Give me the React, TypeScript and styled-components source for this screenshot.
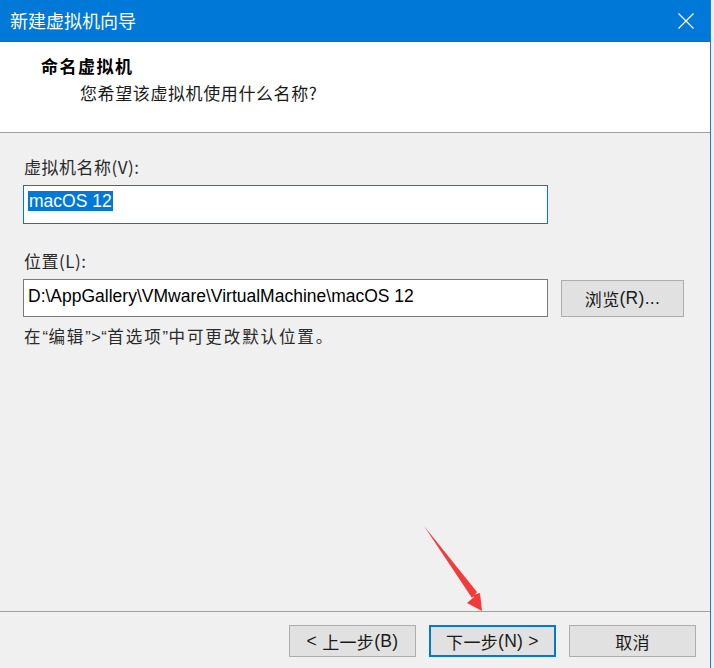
import React from "react";
import styled, { createGlobalStyle } from "styled-components";

const Global = createGlobalStyle`
  html, body { margin: 0; padding: 0; background: #f0f0f0; }
  body { font-family: "Noto Sans CJK SC", "Liberation Sans", sans-serif; }
  * { box-sizing: border-box; }
`;

const Win = styled.div`
  position: relative;
  width: 711px;
  height: 668px;
  display: flex;
  flex-direction: column;
  border-right: 1px solid #1a7fd4;
  background: #f0f0f0;
  overflow: hidden;
`;

const TitleBar = styled.div`
  height: 42px;
  flex: none;
  background: #0078d7;
  color: #fff;
  display: flex;
  align-items: center;
  justify-content: space-between;
  padding: 0 16px 0 10px;
  font-family: "Noto Sans CJK SC", sans-serif;
  font-size: 18px;
`;

const TitleText = styled.span`
  line-height: 1;
  margin-top: -3px;
`;

const Header = styled.div`
  height: 91px;
  flex: none;
  background: #fff;
  border-bottom: 1px solid #a0a0a0;
  padding: 12px 0 0 41px;
  font-family: "Noto Sans CJK SC", sans-serif;
  color: #000;
`;

const HeaderTitle = styled.div`
  font-size: 17px;
  font-weight: 700;
  letter-spacing: 1.5px;
  line-height: 24px;
`;

const HeaderSub = styled.div`
  font-size: 17px;
  letter-spacing: 0.6px;
  line-height: 24px;
  margin: 3px 0 0 39px;
  color: #1a1a1a;
`;

const Body = styled.div`
  flex: 1;
  padding: 22px 0 0 23px;
  display: flex;
  flex-direction: column;
  align-items: flex-start;
`;

const Label = styled.div<{ $gap?: number }>`
  font-family: "Noto Sans CJK SC", sans-serif;
  font-size: 17px;
  letter-spacing: 0.5px;
  line-height: 24px;
  color: #2a2a2a;
  margin-top: ${(p) => p.$gap ?? 0}px;
  padding-left: 1px;
`;

const Row = styled.div`
  display: flex;
  align-items: center;
  gap: 13px;
  margin-top: 6px;
`;

const Field = styled.div<{ $focused?: boolean; $h: number }>`
  width: 525px;
  height: ${(p) => p.$h}px;
  background: #fff;
  border: 1px solid ${(p) => (p.$focused ? "#0078d7" : "#7a7a7a")};
  display: flex;
  align-items: flex-start;
  padding: 5px 0 0 4px;
  font-family: "Liberation Sans", "Noto Sans CJK SC", sans-serif;
  font-size: 17.5px;
  color: #000;
`;

const Selected = styled.span`
  background: #0078d7;
  color: #fff;
  line-height: 20px;
  padding: 0 1px;
`;

const FieldText = styled.span`
  line-height: 20px;
  padding: 1px 0 0 0;
`;

const Button = styled.button<{ $primary?: boolean; $w: number; $h: number }>`
  width: ${(p) => p.$w}px;
  height: ${(p) => p.$h}px;
  background: #e1e1e1;
  border: ${(p) => (p.$primary ? "2px solid #0078d7" : "1px solid #adadad")};
  font-family: "Noto Sans CJK SC", "Liberation Sans", sans-serif;
  font-size: 17px;
  color: #1a1a1a;
  padding: 0;
  display: flex;
  align-items: center;
  justify-content: center;
  letter-spacing: 0.3px;
`;

const Latin = styled.span`
  font-family: "Liberation Sans", sans-serif;
  font-size: 17.5px;
`;

const Hint = styled.div`
  font-family: "Noto Sans CJK SC", sans-serif;
  font-size: 16.5px;
  letter-spacing: 1.9px;
  line-height: 24px;
  color: #2a2a2a;
  margin-top: 7px;
  padding-left: 1px;
`;

const Quote = styled.span`
  font-family: "Liberation Sans", sans-serif;
  letter-spacing: 0.5px;
`;

const Footer = styled.div`
  flex: none;
  height: 57px;
  border-top: 1px solid #a0a0a0;
  display: flex;
  justify-content: flex-end;
  align-items: flex-start;
  gap: 13px;
  padding: 13px 14px 0 0;
`;

const ArrowLayer = styled.svg`
  position: absolute;
  left: 0;
  top: 0;
  pointer-events: none;
`;

export default function App() {
  return (
    <>
      <Global />
      <Win>
        <TitleBar>
          <TitleText>新建虚拟机向导</TitleText>
          <svg width="16" height="16" viewBox="0 0 16 16">
            <path d="M0.5 0.5 L15.5 15.5 M15.5 0.5 L0.5 15.5" stroke="#fff" strokeWidth="1.2" fill="none" />
          </svg>
        </TitleBar>
        <Header>
          <HeaderTitle>命名虚拟机</HeaderTitle>
          <HeaderSub>您希望该虚拟机使用什么名称?</HeaderSub>
        </Header>
        <Body>
          <Label>虚拟机名称(V):</Label>
          <Row>
            <Field $focused $h={39}>
              <Selected>macOS 12</Selected>
            </Field>
          </Row>
          <Label $gap={25}>位置(L):</Label>
          <Row>
            <Field $h={38}>
              <FieldText>D:\AppGallery\VMware\VirtualMachine\macOS 12</FieldText>
            </Field>
            <Button $w={123} $h={37}>
              浏览<Latin>(R)...</Latin>
            </Button>
          </Row>
          <Hint>
            在<Quote>“</Quote>编辑<Quote>”&gt;“</Quote>首选项<Quote>”</Quote>中可更改默认位置。
          </Hint>
        </Body>
        <Footer>
          <Button $w={127} $h={32}>
            <Latin>&lt;&nbsp;</Latin>上一步<Latin>(B)</Latin>
          </Button>
          <Button $w={127} $h={32} $primary>
            下一步<Latin>(N) &gt;</Latin>
          </Button>
          <Button $w={127} $h={32}>
            取消
          </Button>
        </Footer>
        <ArrowLayer width="711" height="668" viewBox="0 0 711 668">
          <polygon
            points="424,526 474,597 467,603 482,611 480,593 473,595"
            fill="#f23b3b"
          />
          <polygon points="424,526 477,592 472,598" fill="#f23b3b" />
        </ArrowLayer>
      </Win>
    </>
  );
}
